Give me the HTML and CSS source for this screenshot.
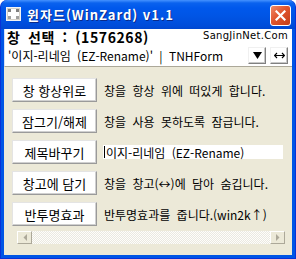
FILE: index.html
```html
<!DOCTYPE html>
<html lang="ko">
<head>
    <meta charset="UTF-8">
    <title>윈자드(WinZard) v1.1</title>
    <link rel="stylesheet" href="styles.css">
</head>
<body>
<div class="window">
    <div class="titlebar">
        <svg class="app-icon" width="15" height="14" viewBox="0 0 15 14">
            <rect x="0.5" y="0.5" width="14" height="13" fill="#d4d0c8" stroke="#f4f4f4"/>
            <rect x="2" y="2" width="11" height="10" fill="#ffffff"/>
            <rect x="2" y="2" width="3" height="3" fill="#808080"/>
            <rect x="10" y="2" width="3" height="3" fill="#808080"/>
            <rect x="2" y="9" width="3" height="3" fill="#a0a0a0"/>
            <rect x="10" y="9" width="3" height="3" fill="#a0a0a0"/>
        </svg>
        <span class="title">윈자드(WinZard) v1.1</span>
        <button class="close" title="닫기">
            <svg width="11" height="11" viewBox="0 0 11 11">
                <path d="M1.5 1.5 L9.5 9.5 M9.5 1.5 L1.5 9.5" stroke="#fff" stroke-width="2.2" stroke-linecap="square"/>
            </svg>
        </button>
    </div>

    <div class="client">
        <div class="info">
            <div class="info-top">
                <span class="target">창 선택 : (1576268)</span>
                <span class="site">SangJinNet.Com</span>
            </div>
            <div class="info-bottom">
                <span class="caption">'이지-리네임 (EZ-Rename)' | TNHForm</span>
                <button class="mini">
                    <svg width="9" height="7" viewBox="0 0 9 7"><path d="M0 0 H9 L4.5 7 Z" fill="#000"/></svg>
                </button>
                <button class="mini">
                    <svg width="11" height="7" viewBox="0 0 11 7"><path d="M0.5 3.5 H10.5 M3 1 L0.5 3.5 L3 6 M8 1 L10.5 3.5 L8 6" stroke="#000" stroke-width="1.2" fill="none"/></svg>
                </button>
            </div>
        </div>

        <div class="actions">
            <div class="row">
                <button class="action">창 항상위로</button>
                <span class="desc">창을 항상 위에 떠있게 합니다.</span>
            </div>
            <div class="row">
                <button class="action">잠그기/해제</button>
                <span class="desc">창을 사용 못하도록 잠급니다.</span>
            </div>
            <div class="row">
                <button class="action">제목바꾸기</button>
                <span class="field"><span class="caret"></span>이지-리네임 (EZ-Rename)</span>
            </div>
            <div class="row">
                <button class="action">창고에 담기</button>
                <span class="desc">창을 창고(↔)에 담아 숨깁니다.</span>
            </div>
            <div class="row">
                <button class="action">반투명효과</button>
                <span class="desc">반투명효과를 줍니다.(win2k↑)</span>
            </div>
        </div>

        <div class="hbar">
            <div class="hbar-btn"><svg width="4" height="7" viewBox="0 0 4 7"><path d="M4 0 V7 L0.5 3.5 Z" fill="#aca899"/></svg></div>
            <div class="hbar-track"></div>
            <div class="hbar-btn"><svg width="4" height="7" viewBox="0 0 4 7"><path d="M0 0 V7 L3.5 3.5 Z" fill="#aca899"/></svg></div>
        </div>
    </div>
</div>
</body>
</html>
```

FILE: styles.css
```css
body {
    margin: 0;
    background-color: #ffffff;
    font-family: "Noto Sans CJK KR", "DejaVu Sans", sans-serif;
}

.window {
    width: 296px;
    height: 259px;
    box-sizing: border-box;
    display: flex;
    flex-direction: column;
    background-color: #0055e5;
    border-radius: 7px 7px 0 0;
    border: 1px solid #0831d9;
    border-top: none;
}

.titlebar {
    height: 29px;
    flex: none;
    display: flex;
    align-items: center;
    padding: 0 4px 0 5px;
    border-radius: 7px 7px 0 0;
    background: linear-gradient(to bottom, #4592ff 0, #0a62ee 3px, #0058ec 8px, #0055e5 16px, #004cd9 26px, #0047cf 29px);
}

.app-icon {
    flex: none;
    margin-top: -1px;
}

.title {
    flex: 1;
    margin-left: 6px;
    color: #ffffff;
    font-size: 13px;
    font-weight: bold;
    letter-spacing: 1px;
    text-shadow: 1px 1px 0 #0a2a8a;
    white-space: nowrap;
}

.close {
    width: 21px;
    height: 21px;
    padding: 0;
    margin-top: 1px;
    display: flex;
    align-items: center;
    justify-content: center;
    border: 1px solid #ffffff;
    border-radius: 3px;
    background: linear-gradient(to bottom right, #f08a68, #e0552e 45%, #c43d17);
}

.client {
    flex: 1;
    margin: 0 3px 3px;
    background-color: #ece9d8;
    display: flex;
    flex-direction: column;
}

.info {
    flex: none;
    height: 36px;
    background-color: #ffffff;
    border-bottom: 1px solid #aca899;
    border-left: 1px solid #d6e0f5;
    padding: 1px 4px 0 2px;
    display: flex;
    flex-direction: column;
}

.info-top {
    display: flex;
    justify-content: space-between;
    align-items: flex-start;
    height: 16px;
}

.target {
    font-size: 14px;
    font-weight: bold;
    line-height: 15px;
    color: #000000;
    letter-spacing: 0.6px;
    word-spacing: 3px;
}

.site {
    font-family: "DejaVu Sans", sans-serif;
    font-size: 10px;
    line-height: 12px;
    color: #000000;
    letter-spacing: 0.3px;
}

.info-bottom {
    display: flex;
    align-items: center;
    height: 18px;
}

.caption {
    flex: 1;
    font-size: 12px;
    line-height: 13px;
    padding-left: 1px;
    word-spacing: 3px;
    white-space: nowrap;
}

.mini {
    width: 18px;
    height: 17px;
    padding: 0;
    margin-left: 4px;
    display: flex;
    align-items: center;
    justify-content: center;
    background-color: #ffffff;
    border: 1px solid;
    border-color: #f0f0f0 #808080 #808080 #f0f0f0;
    box-shadow: inset -1px -1px 0 #c8c8c8;
}

.actions {
    flex: none;
    display: flex;
    flex-direction: column;
    gap: 7px;
    padding: 11px 0 0 8px;
}

.row {
    display: flex;
    align-items: center;
    height: 24px;
}

.action {
    width: 85px;
    height: 24px;
    padding: 0;
    font-family: "Noto Sans CJK KR", sans-serif;
    font-size: 13px;
    color: #000000;
    background-color: #ffffff;
    border: 1px solid;
    border-color: #e4e4e4 #9a9a9a #9a9a9a #e4e4e4;
    box-shadow: inset -1px -1px 0 #d0d0d0;
}

.desc {
    margin-left: 7px;
    font-size: 12px;
    word-spacing: 3px;
    white-space: nowrap;
}

.field {
    margin-left: 6px;
    width: 180px;
    height: 14px;
    display: flex;
    align-items: center;
    background-color: #ffffff;
    font-size: 12px;
    word-spacing: 3px;
    white-space: nowrap;
}

.caret {
    width: 1px;
    height: 12px;
    margin: 0 1px 0 1px;
    background-color: #000000;
}

.hbar {
    flex: none;
    display: flex;
    height: 13px;
    margin: 5px 7px 0 13px;
}

.hbar-btn {
    width: 15px;
    flex: none;
    display: flex;
    align-items: center;
    justify-content: center;
    box-sizing: border-box;
    background-color: #ece9d8;
    border: 1px solid;
    border-color: #ffffff #aca899 #aca899 #ffffff;
}

.hbar-track {
    flex: 1;
    background-color: #f4f3ee;
    background-image: repeating-conic-gradient(#fdfdfb 0 25%, #ebe9e0 0 50%);
    background-size: 2px 2px;
}
```
